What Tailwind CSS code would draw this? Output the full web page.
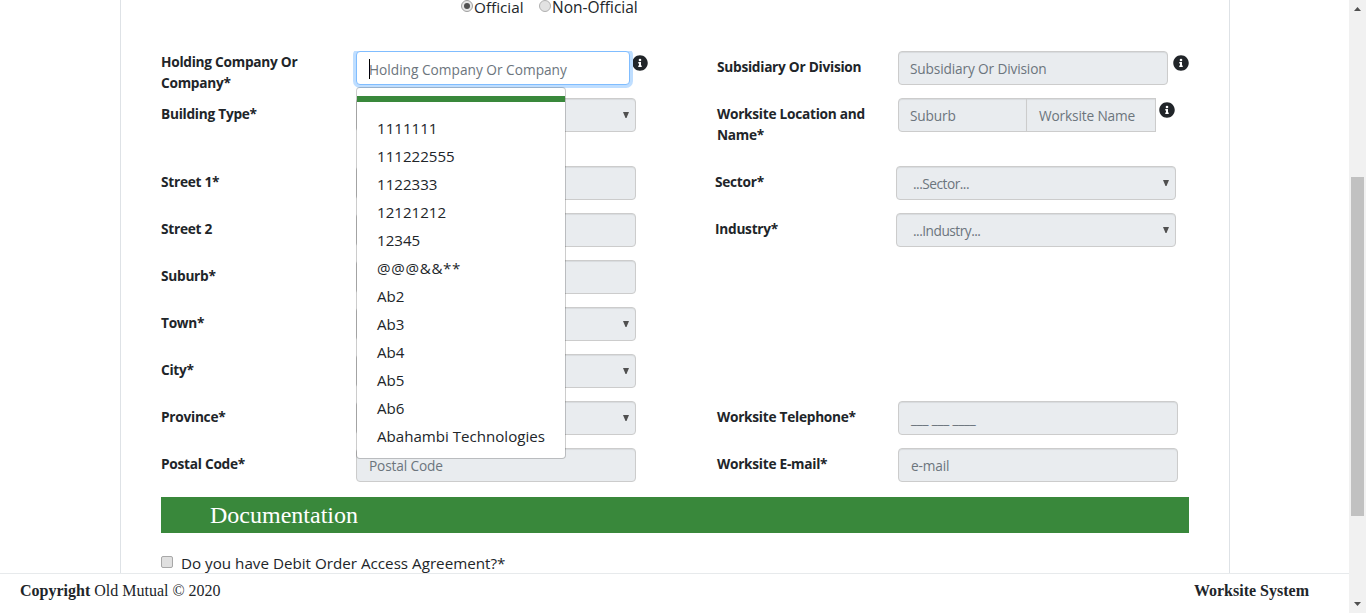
<!DOCTYPE html>
<html lang="en">
<head>
<meta charset="utf-8">
<title>Worksite System</title>
<script src="https://cdn.jsdelivr.net/npm/@tailwindcss/browser@4"></script>
</head>
<body class="h-[613px] overflow-hidden bg-white font-['Open_Sans','Noto_Sans',sans-serif] text-[#212529]">
<svg class="hidden"><symbol id="info" viewBox="0 0 512 512"><path fill="currentColor" d="M256 8C119 8 8 119 8 256s111 248 248 248 248-111 248-248S393 8 256 8zm0 110a42 42 0 1 1 0 84 42 42 0 0 1 0-84zm56 254c0 7-5 12-12 12h-88c-7 0-12-5-12-12v-24c0-7 5-12 12-12h12v-64h-12c-7 0-12-5-12-12v-24c0-7 5-12 12-12h64c7 0 12 5 12 12v100h12c7 0 12 5 12 12z"/></symbol>
<symbol id="caret" viewBox="0 0 6 7"><path fill="#505050" d="M0 0h6L3.5 6h-1z"/></symbol></svg>
<div class="flex h-full">
  <div class="flex h-full w-[1349px] flex-col">
    <main class="h-[573px] overflow-hidden">
      <div class="relative mx-auto ml-[120px] h-full w-[1110px] border-x border-[#dee2e6] pl-10">
        <div class="flex h-[51px] items-start pl-[300px]">
          <div class="flex h-3.5 w-[78px] items-center"><span class="mr-px mb-0.5 flex size-3 shrink-0 items-center justify-center rounded-full border border-[#a0a0a0] bg-[#e6e6e6]"><span class="size-1.5 rounded-full bg-[#505050]"></span></span><span class="whitespace-nowrap text-[15.3px] leading-3.5">Official</span></div>
          <div class="flex h-3.5 items-center"><span class="mr-px mb-0.5 size-3 shrink-0 rounded-full border border-[#b0b0b0] bg-[#e2e2e2]"></span><span class="whitespace-nowrap text-[15.5px] leading-3.5">Non-Official</span></div>
        </div>
        <div class="flex text-[13.7px]">
          <div class="w-[475px] font-bold leading-[21px] tracking-[-0.27px]">
            <div class="flex h-[47px]"><div class="w-[195px] shrink-0">Holding Company Or<br>Company*</div>
              <div class="flex h-[34px] w-[274px] shrink-0 items-center rounded border border-[#80bdff] bg-white pl-3 pt-0.5 font-normal tracking-normal text-[#6c757d] shadow-[0_0_0_3px_#bfdeff] [clip-path:inset(0_-4px_-4px_-4px)]"><span class="-mr-px h-5 w-px bg-black"></span><span class="whitespace-nowrap">Holding Company Or Company</span></div><svg class="ml-0.5 mt-1 size-4 shrink-0"><use href="#info"/></svg></div>
            <div class="flex h-[68px]"><div class="mt-[5px] w-[195px]">Building Type*</div><div class="flex h-[34px] w-[280px] items-center justify-end rounded border border-[#ccc] bg-[#e9ecef] pr-1.5 shadow-[inset_0_1px_1px_rgba(0,0,0,0.075)]"><svg class="h-[7px] w-1.5"><use href="#caret"/></svg></div></div>
            <div class="flex h-[47px]"><div class="mt-[5px] w-[195px]">Street 1*</div><div class="h-[34px] w-[280px] rounded border border-[#ccc] bg-[#e9ecef] shadow-[inset_0_1px_1px_rgba(0,0,0,0.075)]"></div></div>
            <div class="flex h-[47px]"><div class="mt-[5px] w-[195px]">Street 2</div><div class="h-[34px] w-[280px] rounded border border-[#ccc] bg-[#e9ecef] shadow-[inset_0_1px_1px_rgba(0,0,0,0.075)]"></div></div>
            <div class="flex h-[47px]"><div class="mt-[5px] w-[195px]">Suburb*</div><div class="h-[34px] w-[280px] rounded border border-[#ccc] bg-[#e9ecef] shadow-[inset_0_1px_1px_rgba(0,0,0,0.075)]"></div></div>
            <div class="flex h-[47px]"><div class="mt-[5px] w-[195px]">Town*</div><div class="flex h-[34px] w-[280px] items-center justify-end rounded border border-[#ccc] bg-[#e9ecef] pr-1.5 shadow-[inset_0_1px_1px_rgba(0,0,0,0.075)]"><svg class="h-[7px] w-1.5"><use href="#caret"/></svg></div></div>
            <div class="flex h-[47px]"><div class="mt-[5px] w-[195px]">City*</div><div class="flex h-[34px] w-[280px] items-center justify-end rounded border border-[#ccc] bg-[#e9ecef] pr-1.5 shadow-[inset_0_1px_1px_rgba(0,0,0,0.075)]"><svg class="h-[7px] w-1.5"><use href="#caret"/></svg></div></div>
            <div class="flex h-[47px]"><div class="mt-[5px] w-[195px]">Province*</div><div class="flex h-[34px] w-[280px] items-center justify-end rounded border border-[#ccc] bg-[#e9ecef] pr-1.5 shadow-[inset_0_1px_1px_rgba(0,0,0,0.075)]"><svg class="h-[7px] w-1.5"><use href="#caret"/></svg></div></div>
            <div class="flex h-[49px]"><div class="mt-[5px] w-[195px]">Postal Code*</div><div class="flex h-[34px] w-[280px] items-center rounded border border-[#ccc] bg-[#e9ecef] pl-3 pt-px font-normal text-[#6c757d] shadow-[inset_0_1px_1px_rgba(0,0,0,0.075)] tracking-[-0.15px]">Postal Code</div></div>
          </div>
          <div class="ml-[79px] font-bold leading-[21px] tracking-[-0.27px]">
            <div class="flex h-[47px] pl-0.5"><div class="mt-[5px] w-[181px]">Subsidiary Or Division</div><div class="flex h-[34px] w-[270px] items-center rounded border border-[#ccc] bg-[#e9ecef] pl-[11px] pt-px font-normal tracking-[-0.15px] text-[#6c757d] shadow-[inset_0_1px_1px_rgba(0,0,0,0.075)]">Subsidiary Or Division</div><svg class="ml-[5px] mt-1 size-4"><use href="#info"/></svg></div>
            <div class="flex h-[68px] pl-0.5"><div class="mt-[5px] w-[181px]">Worksite Location and<br>Name*</div><div class="flex h-[34px] w-[129px] items-center rounded-l border border-[#ccc] bg-[#e9ecef] pl-[11px] pt-px font-normal tracking-[-0.15px] text-[#6c757d] shadow-[inset_0_1px_1px_rgba(0,0,0,0.075)]">Suburb</div><div class="-ml-px flex h-[34px] w-[130px] items-center border border-[#ccc] bg-[#e9ecef] pl-3 pt-px font-normal tracking-[-0.15px] text-[#6c757d] shadow-[inset_0_1px_1px_rgba(0,0,0,0.075)]">Worksite Name</div><svg class="ml-[3px] mt-1 size-4"><use href="#info"/></svg></div>
            <div class="flex h-[47px]"><div class="mt-[5px] w-[181px]">Sector*</div><div class="flex h-[34px] w-[280px] items-center justify-between rounded border border-[#ccc] bg-[#e9ecef] pl-4 pr-1.5 font-normal tracking-[-0.5px] text-[#6c757d] shadow-[inset_0_1px_1px_rgba(0,0,0,0.075)]"><span class="pt-px">...Sector...</span><svg class="h-[7px] w-1.5"><use href="#caret"/></svg></div></div>
            <div class="flex h-[188px]"><div class="mt-[5px] w-[181px]">Industry*</div><div class="flex h-[34px] w-[280px] items-center justify-between rounded border border-[#ccc] bg-[#e9ecef] pl-4 pr-1.5 font-normal tracking-[-0.5px] text-[#6c757d] shadow-[inset_0_1px_1px_rgba(0,0,0,0.075)]"><span class="pt-px">...Industry...</span><svg class="h-[7px] w-1.5"><use href="#caret"/></svg></div></div>
            <div class="flex h-[47px] pl-0.5"><div class="mt-[5px] w-[181px]">Worksite Telephone*</div><div class="flex h-[34px] w-[280px] items-center rounded border border-[#ccc] bg-[#e9ecef] pl-3 pt-px font-normal tracking-[-0.2px] text-[#6c757d] shadow-[inset_0_1px_1px_rgba(0,0,0,0.075)]">___ ___ ____</div></div>
            <div class="flex h-[49px] pl-0.5"><div class="mt-[5px] w-[181px]">Worksite E-mail*</div><div class="flex h-[34px] w-[280px] items-center rounded border border-[#ccc] bg-[#e9ecef] pl-3 pt-px font-normal tracking-[-0.15px] text-[#6c757d] shadow-[inset_0_1px_1px_rgba(0,0,0,0.075)]">e-mail</div></div>
          </div>
        </div>
        <h2 class="flex h-9 w-[1028px] items-center bg-[#39883b] pl-[49px] font-['Liberation_Serif',serif] text-2xl text-white">Documentation</h2>
        <div class="mt-[18px] flex h-6 items-center"><span class="mr-2 mb-0.5 size-3 rounded-[2px] border border-[#a8a8a8] bg-[#e0e0e0]"></span><span class="text-[15.2px]">Do you have Debit Order Access Agreement?*</span></div>
        <div class="absolute left-[235px] top-[87px] h-[372px] w-[210px] rounded border border-black/20 bg-white bg-clip-padding pt-2">
          <div class="h-1.5 bg-[#39883b]"></div>
          <ul class="pl-5 pt-[12px] text-[15.1px] leading-7 whitespace-nowrap">
            <li>1111111</li><li>111222555</li><li>1122333</li><li>12121212</li><li>12345</li><li class="tracking-[0.7px]">@@@&amp;&amp;**</li><li>Ab2</li><li>Ab3</li><li>Ab4</li><li>Ab5</li><li>Ab6</li><li>Abahambi Technologies</li>
          </ul>
        </div>
      </div>
    </main>
    <footer class="flex h-10 justify-between border-t border-[#e7eaec] pl-5 pr-10 pt-[5px] font-['Liberation_Serif',serif] text-base leading-6"><div><b>Copyright</b> Old Mutual © 2020</div><b>Worksite System</b></footer>
  </div>
  <div class="flex w-[17px] flex-col items-center justify-between bg-[#f1f1f1] pt-[7px] pb-[7px]">
    <svg class="h-1 w-[7px]" viewBox="0 0 7 4"><path fill="#505050" d="M0 4h7L3.5 0z"/></svg>
    <div class="mt-[166px] mb-auto h-[339px] w-[13px] bg-[#c1c1c1]"></div>
    <svg class="h-1 w-[7px]" viewBox="0 0 7 4"><path fill="#505050" d="M0 0h7L3.5 4z"/></svg>
  </div>
</div>
</body>
</html>
